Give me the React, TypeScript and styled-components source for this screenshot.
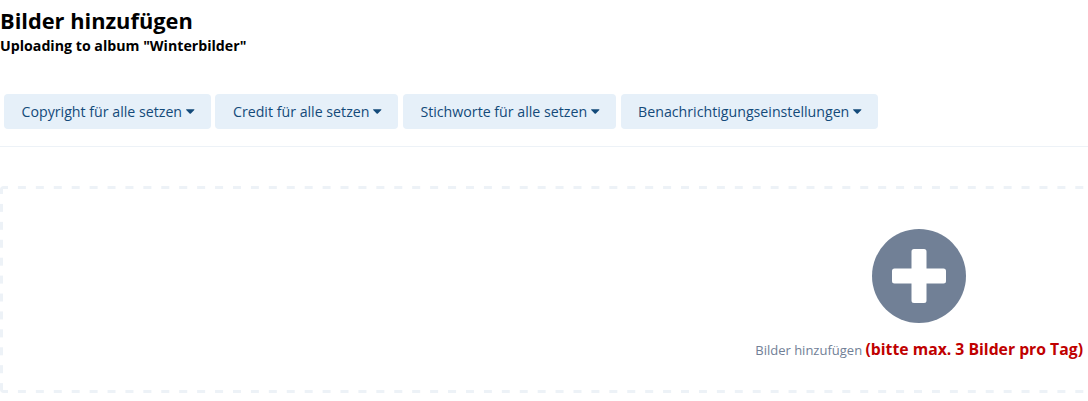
import styled, { createGlobalStyle } from 'styled-components';

const GlobalStyle = createGlobalStyle`
	html, body {
		margin: 0;
		padding: 0;
		background: #fff;
		font-family: 'Open Sans', 'Liberation Sans', sans-serif;
	}
`;

const actions = [
	'Copyright für alle setzen',
	'Credit für alle setzen',
	'Stichworte für alle setzen',
	'Benachrichtigungseinstellungen',
];

function App() {
	return (
		<Page>
			<GlobalStyle />
			<Header>
				<Title>Bilder hinzufügen</Title>
				<Subtitle>Uploading to album "Winterbilder"</Subtitle>
			</Header>
			<Toolbar>
				{actions.map((label) => (
					<ActionButton key={label}>
						{label}
						<Caret viewBox='0 0 9 5'>
							<path d='M.6 0h7.8c.5 0 .8.6.4 1L4.9 4.8c-.2.2-.6.2-.8 0L.2 1C-.2.6.1 0 .6 0z' />
						</Caret>
					</ActionButton>
				))}
			</Toolbar>
			<DropZone>
				<AddBlock>
					<AddIcon viewBox='0 0 94 94'>
						<circle cx='47' cy='47' r='47' fill='#718096' />
						<path
							fill='#fff'
							d='M39.5 22.5a2.5 2.5 0 0 1 2.5-2.5h10a2.5 2.5 0 0 1 2.5 2.5v17h17a2.5 2.5 0 0 1 2.5 2.5v10a2.5 2.5 0 0 1-2.5 2.5h-17v17a2.5 2.5 0 0 1-2.5 2.5H42a2.5 2.5 0 0 1-2.5-2.5v-17h-17a2.5 2.5 0 0 1-2.5-2.5V42a2.5 2.5 0 0 1 2.5-2.5h17z'
						/>
					</AddIcon>
					<AddLabel>
						Bilder hinzufügen <Limit>(bitte max. 3 Bilder pro Tag)</Limit>
					</AddLabel>
				</AddBlock>
			</DropZone>
		</Page>
	);
}

export default App;

const Page = styled.main`
	width: 1088px;
	height: 401px;
	overflow: hidden;
`;

const Header = styled.header`
	display: flex;
	flex-direction: column;
	padding-top: 6px;
	color: #000;
`;

const Title = styled.h1`
	margin: 0;
	font-size: 21.8px;
	line-height: 30px;
	font-weight: 700;
`;

const Subtitle = styled.p`
	margin: 0;
	font-size: 14.2px;
	line-height: 19px;
	font-weight: 700;
`;

const Toolbar = styled.div`
	display: flex;
	gap: 4.65px;
	margin-top: 39px;
	padding: 0 4px 17px;
	border-bottom: 1px solid #edf2f7;
`;

const ActionButton = styled.button`
	display: flex;
	align-items: center;
	height: 35px;
	padding: 0 16.3px 0 17.5px;
	border: 0;
	border-radius: 4px;
	background: #e6f0f9;
	color: #134a7a;
	font-family: inherit;
	font-size: 14.2px;
	white-space: nowrap;
`;

const Caret = styled.svg`
	width: 8.5px;
	height: 5px;
	margin-left: 4px;
	fill: #134a7a;
`;

const DropZone = styled.section`
	display: flex;
	justify-content: flex-end;
	box-sizing: border-box;
	height: 207px;
	margin-top: 39px;
	padding: 43px 5px 0 0;
	border-radius: 4px;
	background-image: linear-gradient(to right, #edf2f7 8px, transparent 8px),
		linear-gradient(to right, #edf2f7 8px, transparent 8px),
		linear-gradient(to bottom, #edf2f7 8px, transparent 8px);
	background-size: 17.93px 3px, 17.93px 3px, 3px 17.93px;
	background-position: left top, left bottom, left top;
	background-repeat: repeat-x, repeat-x, repeat-y;
`;

const AddBlock = styled.div`
	display: flex;
	flex-direction: column;
	align-items: center;
`;

const AddIcon = styled.svg`
	display: block;
	width: 94px;
	height: 94px;
`;

const AddLabel = styled.div`
	margin-top: 14px;
	font-size: 13px;
	line-height: 24px;
	color: #718096;
	white-space: nowrap;
`;

const Limit = styled.b`
	font-size: 15.75px;
	font-weight: 700;
	color: #c00000;
`;
